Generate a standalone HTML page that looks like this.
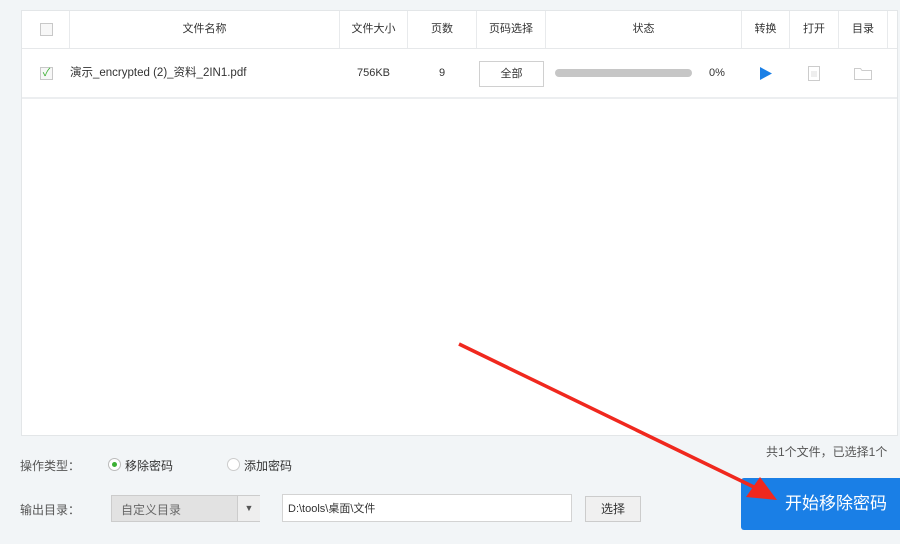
<!DOCTYPE html><html><head><meta charset="utf-8"><style>
body{margin:0;width:900px;height:544px;background:#f2f5f7;font-family:"Liberation Sans","Noto Sans CJK SC",sans-serif;font-size:12px;color:#333;position:relative;overflow:hidden}
.a{position:absolute}
.tbl{left:21px;top:10px;width:875px;height:424px;background:#fff;border:1px solid #e3e6e8}
.hd{top:0;height:37px;border-bottom:1px solid #e6e8ea;width:100%;background:#fff}
.row{top:38px;height:48px;border-bottom:2px solid #eceef0;width:100%}
.c{position:absolute;top:0;height:37px;line-height:37px;text-align:center;border-right:1px solid #e8eaec;font-size:11px}
.r{position:absolute;top:0;height:48px;line-height:48px;text-align:center;font-size:11px}
.cb{position:absolute;width:11px;height:11px;border:1px solid #c8c8c8;background:#f7f7f7}
</style></head><body>
<div class="a tbl">
 <div class="a hd">
  <div class="c" style="left:0;width:47px"><span class="cb" style="left:18px;top:12px"></span></div>
  <div class="c" style="left:48px;width:269px">文件名称</div>
  <div class="c" style="left:318px;width:67px">文件大小</div>
  <div class="c" style="left:386px;width:68px">页数</div>
  <div class="c" style="left:455px;width:68px">页码选择</div>
  <div class="c" style="left:524px;width:195px">状态</div>
  <div class="c" style="left:720px;width:47px">转换</div>
  <div class="c" style="left:768px;width:48px">打开</div>
  <div class="c" style="left:817px;width:48px">目录</div>
 </div>
 <div class="a row">
  <span class="cb" style="left:18px;top:18px;color:#3cb034;font-size:11px;line-height:11px;text-align:center">✓</span>
  <div class="r" style="left:48px;text-align:left;font-size:11.5px">演示_encrypted (2)_资料_2IN1.pdf</div>
  <div class="r" style="left:318px;width:67px">756KB</div>
  <div class="r" style="left:386px;width:68px">9</div>
  <div class="a" style="left:457px;top:12px;width:63px;height:24px;border:1px solid #d0d0d0;line-height:24px;text-align:center;font-size:11px;background:#fff">全部</div>
  <div class="a" style="left:533px;top:20px;width:137px;height:8px;border-radius:4px;background:#c6c6c6"></div>
  <div class="r" style="left:683px;width:24px">0%</div>
  <svg class="a" style="left:737px;top:18px" width="14" height="13"><path d="M1 0L13 6.5L1 13Z" fill="#1a7fe6"/></svg>
  <svg class="a" style="left:786px;top:17px" width="12" height="15"><rect x=".5" y=".5" width="11" height="14" fill="none" stroke="#ccc"/><path d="M3 6h6M3 8h6M3 10h6" stroke="#ddd"/></svg>
  <svg class="a" style="left:832px;top:18px" width="18" height="13"><path d="M.5 1.5h6l1.5 2h9.5v9H.5z" fill="none" stroke="#ccc"/></svg>
 </div>
</div>
<div class="a" style="left:766px;top:443px;font-size:12px;color:#555;white-space:nowrap">共1个文件，已选择1个</div>
<div class="a" style="left:20px;top:457px;color:#555">操作类型：</div>
<div class="a" style="left:108px;top:458px;width:11px;height:11px;border:1px solid #bbb;border-radius:50%;background:#fff"><div class="a" style="left:3px;top:3px;width:5px;height:5px;border-radius:50%;background:#3cb034"></div></div>
<div class="a" style="left:125px;top:457px">移除密码</div>
<div class="a" style="left:227px;top:458px;width:11px;height:11px;border:1px solid #ccc;border-radius:50%;background:#fff"></div>
<div class="a" style="left:244px;top:457px">添加密码</div>
<div class="a" style="left:20px;top:501px;color:#555">输出目录：</div>
<div class="a" style="left:111px;top:495px;width:147px;height:25px;border:1px solid #ccc;background:#e2e2e2"><span class="a" style="left:9px;top:5px;color:#666">自定义目录</span><span class="a" style="left:125px;top:0;width:22px;height:25px;border-left:1px solid #ccc;background:#eee;text-align:center;line-height:25px;font-size:9px;color:#555">▼</span></div>
<div class="a" style="left:282px;top:494px;width:288px;height:26px;border:1px solid #d3d3d3;background:#fff"><span class="a" style="left:5px;top:5px;font-size:11px">D:\tools\桌面\文件</span></div>
<div class="a" style="left:585px;top:496px;width:54px;height:24px;border:1px solid #ccc;background:#f0f0f0;text-align:center;line-height:24px">选择</div>
<div class="a" style="left:741px;top:478px;width:165px;height:52px;background:#1a7fe6;border-radius:3px;color:#fff;font-size:17px;line-height:52px;text-indent:44px">开始移除密码</div>
<svg class="a" style="left:0;top:0" width="900" height="544"><line x1="459" y1="344" x2="760" y2="490" stroke="#f0281e" stroke-width="3.5"/><path d="M777 500L746 497L760 477Z" fill="#f0281e"/></svg>
</body></html>
